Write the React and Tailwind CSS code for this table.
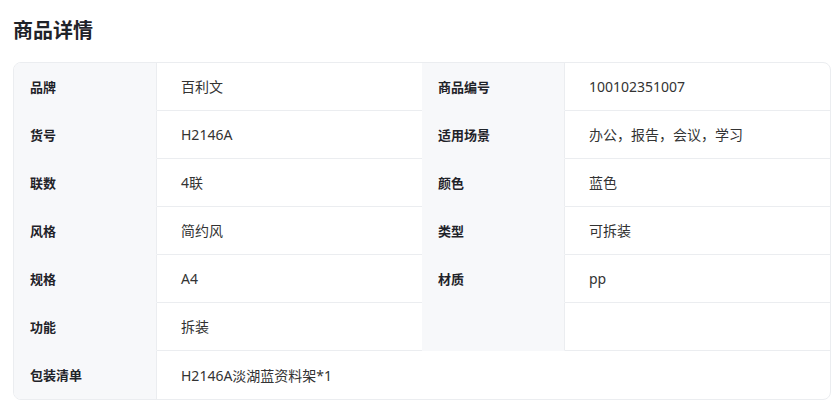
import React from "react";

const rows = [
  ["品牌", "百利文", "商品编号", "100102351007"],
  ["货号", "H2146A", "适用场景", "办公，报告，会议，学习"],
  ["联数", "4联", "颜色", "蓝色"],
  ["风格", "简约风", "类型", "可拆装"],
  ["规格", "A4", "材质", "pp"],
  ["功能", "拆装", "", ""],
];

function Label({ children }) {
  return (
    <div className="h-[48px] flex items-center pl-4 bg-[#f7f8fa] border-r border-b border-r-[#ebedf0] border-b-[#f7f8fa] text-[13px] font-bold text-[#1f2329]">
      {children}
    </div>
  );
}

function Value({ children, className = "" }) {
  return (
    <div
      className={"h-[48px] flex items-center pl-6 border-b border-[#ebedf0] text-[14px] text-[#333] " + className}
      style={{ fontFamily: '"Noto Sans", "Noto Sans CJK SC", sans-serif' }}
    >
      {children}
    </div>
  );
}

export default function App() {
  return (
    <div
      className="bg-white w-[833px] h-[407px] pt-4 pl-[13px]"
      style={{ fontFamily: '"Noto Sans CJK SC", "Noto Sans", sans-serif' }}
    >
      <div className="text-[20px] leading-[28px] font-bold text-[#1f2329] mb-[18px]">商品详情</div>
      <div className="w-[818px] border border-[#ebedf0] rounded-lg overflow-hidden grid grid-cols-[143px_265px_143px_265px]">
        {rows.map((r, i) => (
          <React.Fragment key={i}>
            <Label>{r[0]}</Label>
            <Value>{r[1]}</Value>
            <Label>{r[2]}</Label>
            <Value>{r[3]}</Value>
          </React.Fragment>
        ))}
        <div className="h-[48px] flex items-center pl-4 bg-[#f7f8fa] border-r border-[#ebedf0] text-[13px] font-bold text-[#1f2329]">
          包装清单
        </div>
        <div
          className="col-span-3 h-[48px] flex items-center pl-6 text-[14px] text-[#333]"
          style={{ fontFamily: '"Noto Sans", "Noto Sans CJK SC", sans-serif' }}
        >
          H2146A淡湖蓝资料架*1
        </div>
      </div>
    </div>
  );
}
